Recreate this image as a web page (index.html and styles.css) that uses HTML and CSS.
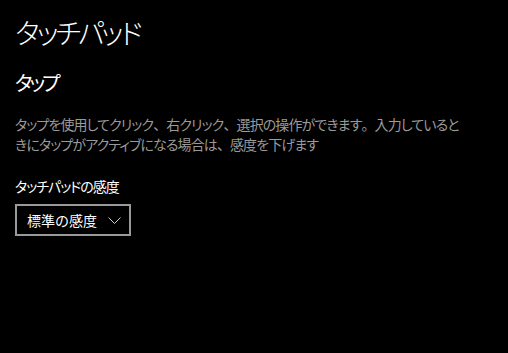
FILE: index.html
```html
<!DOCTYPE html>
<html lang="ja">
<head>
<meta charset="utf-8">
<link rel="stylesheet" href="styles.css">
</head>
<body>
<main class="page">
  <h1 class="title">タッチパッド</h1>
  <h2 class="section">タップ</h2>
  <p class="desc">タップを使用してクリック<span class="pu">、</span>右クリック<span class="pu">、</span>選択の操作ができます<span class="pu">。</span>入力しているときにタップがアクティブになる場合は<span class="pu">、</span>感度を下げます</p>
  <div class="label">タッチパッドの感度</div>
  <button class="select">
    <span class="select-text">標準の感度</span>
    <svg class="chev" width="13" height="7" viewBox="0 0 13 7"><path d="M0.5 0.5 L6.5 6.5 L12.5 0.5" fill="none" stroke="#cfcfcf" stroke-width="1"/></svg>
  </button>
</main>
</body>
</html>
```
FILE: styles.css
```css
html, body {
  margin: 0;
  padding: 0;
  background: #000;
}
body {
  font-family: "Noto Sans CJK JP", "Noto Sans", sans-serif;
  color: #fff;
  font-feature-settings: "palt";
}
.page {
  display: flex;
  flex-direction: column;
  align-items: flex-start;
  padding: 12px 14px 0 15px;
  width: 455px;
}
.title {
  margin: 0;
  font-size: 28px;
  font-weight: 300;
  line-height: 40px;
  letter-spacing: -3px;
}
.section {
  margin: 17px 0 0;
  font-size: 20px;
  font-weight: 400;
  line-height: 28px;
  letter-spacing: -3px;
}
.desc {
  margin: 17px 0 0;
  font-size: 14px;
  line-height: 20px;
  color: #9a9a9a;
  letter-spacing: -0.9px;
}
.pu {
  font-feature-settings: normal;
}
.label {
  margin-top: 22px;
  font-size: 14px;
  line-height: 20px;
  letter-spacing: -1px;
}
.select {
  margin-top: 8px;
  display: flex;
  align-items: center;
  gap: 11px;
  height: 32px;
  padding: 0 8px 0 10px;
  background: #000;
  border: 2px solid #999;
  color: #fff;
  font-family: inherit;
  font-size: 14px;
  font-feature-settings: normal;
}
.select-text {
  line-height: 20px;
}
.chev {
  display: block;
}
```
